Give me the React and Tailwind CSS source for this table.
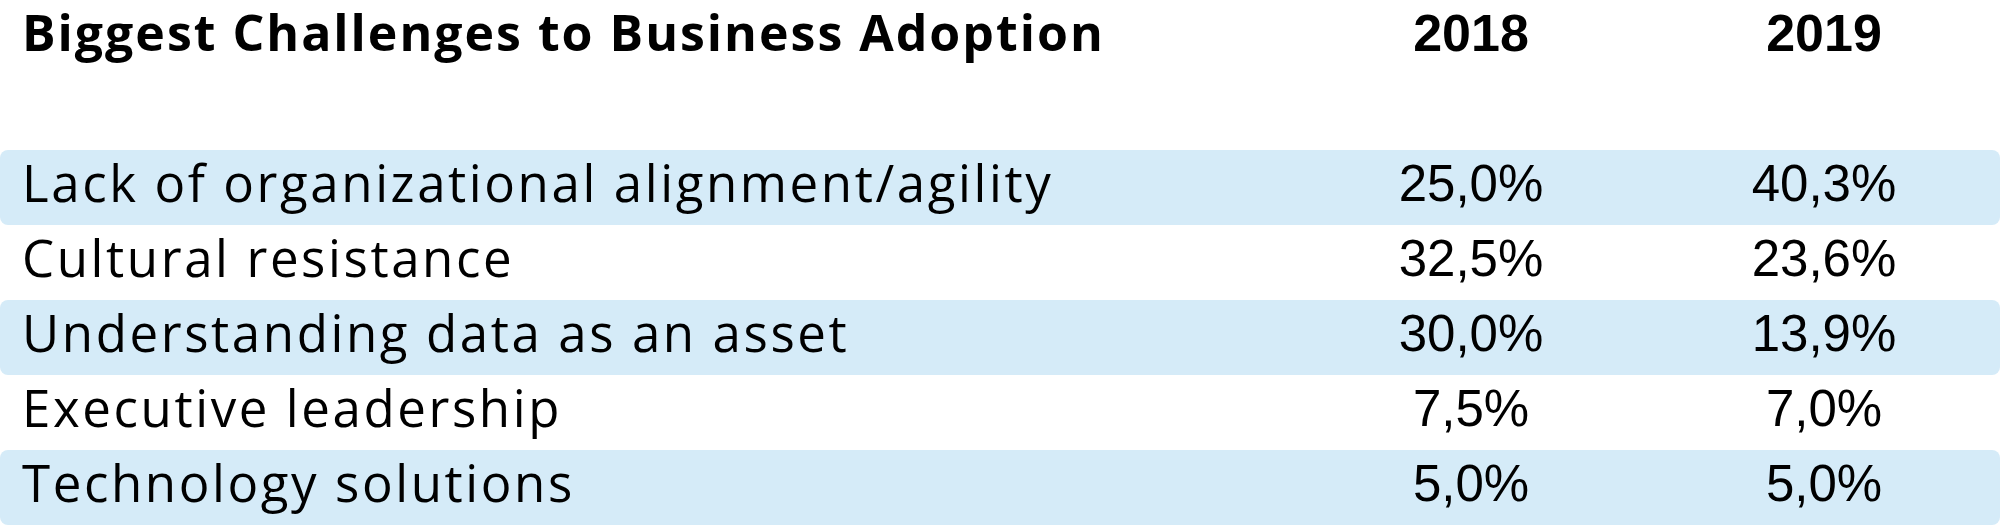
const filas = [
  { reto: 'Lack of organizational alignment/agility', a2018: '25,0%', a2019: '40,3%' },
  { reto: 'Cultural resistance', a2018: '32,5%', a2019: '23,6%' },
  { reto: 'Understanding data as an asset', a2018: '30,0%', a2019: '13,9%' },
  { reto: 'Executive leadership', a2018: '7,5%', a2019: '7,0%' },
  { reto: 'Technology solutions', a2018: '5,0%', a2019: '5,0%' },
]

const cols = 'grid grid-cols-[1294px_354px_352px]'
const etiqueta = "font-['Open_Sans',sans-serif]"
const numero = "font-['Liberation_Sans',Arial,sans-serif]"

export default function App() {
  return (
    <div className="w-[2000px] h-[525px] overflow-hidden bg-white text-black">
      {/* cabecera */}
      <div className={`${cols} h-[150px] items-start`}>
        <h1 className={`${etiqueta} whitespace-nowrap pl-[22px] text-[50px] font-bold leading-[70px] tracking-[2px] -mt-[3px]`}>
          Biggest Challenges to Business Adoption
        </h1>
        <div className={`${numero} text-center text-[52px] font-bold leading-[67px]`}>2018</div>
        <div className={`${numero} text-center text-[52px] font-bold leading-[67px]`}>2019</div>
      </div>

      {/* filas alternas */}
      {filas.map((f, i) => (
        <div key={f.reto}
          className={`${cols} h-[75px] items-start rounded-lg ${i % 2 === 0 ? 'bg-[#d5ebf8]' : ''}`}>
          <div className={`${etiqueta} whitespace-nowrap pl-[22px] text-[51px] leading-[64px] tracking-[2.6px]`}>{f.reto}</div>
          <div className={`${numero} text-center text-[51px] leading-[68px]`}>{f.a2018}</div>
          <div className={`${numero} text-center text-[51px] leading-[68px]`}>{f.a2019}</div>
        </div>
      ))}
    </div>
  )
}
